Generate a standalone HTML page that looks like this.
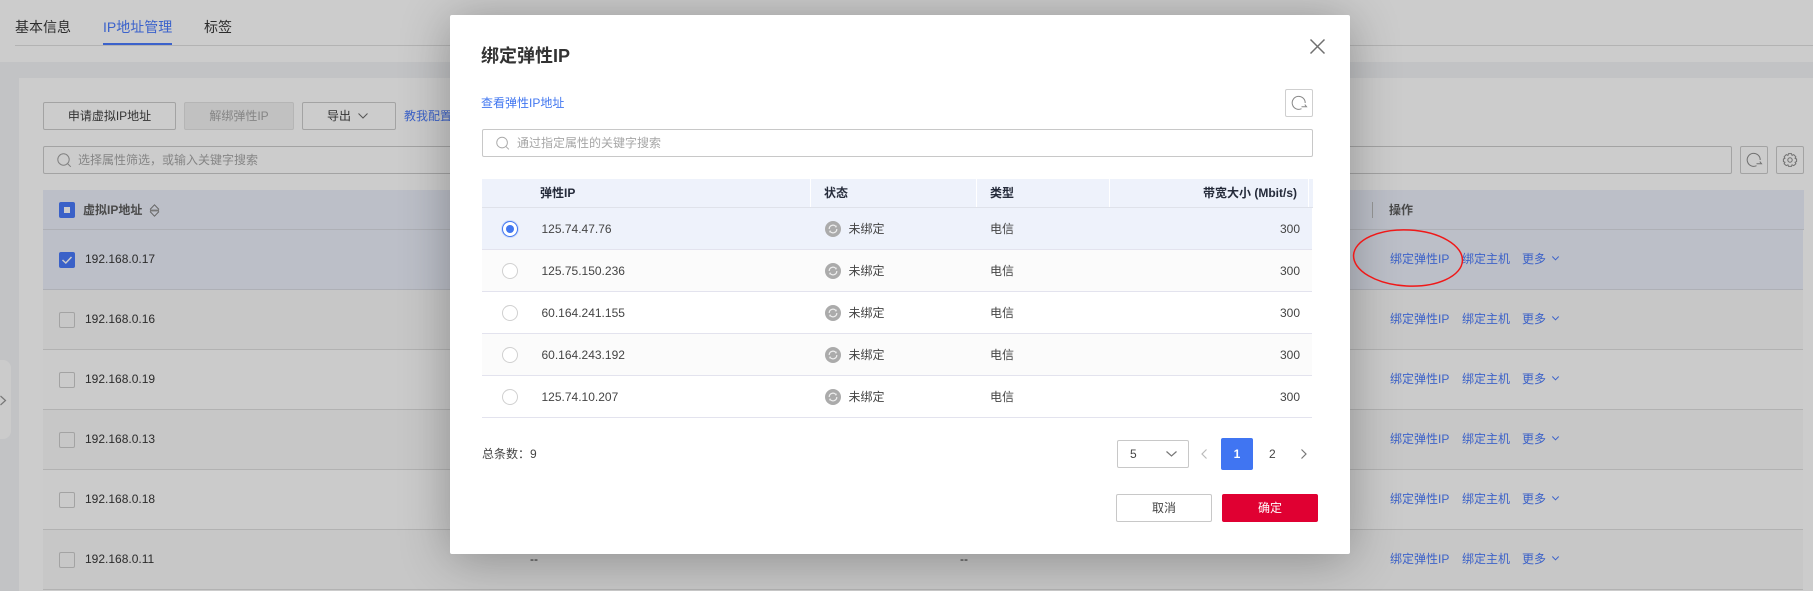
<!DOCTYPE html>
<html lang="zh"><head><meta charset="utf-8"><title>绑定弹性IP</title>
<style>
html,body{margin:0;padding:0;width:1813px;height:591px;overflow:hidden;background:#ccc}
body{position:relative;font-family:"Liberation Sans","Noto Sans CJK SC",sans-serif;font-size:12px;color:#333}
.a{position:absolute;box-sizing:border-box}
.t{position:absolute;white-space:nowrap;line-height:16px;height:16px}
.b{position:absolute;box-sizing:border-box;border:1px solid #a3a3a3;border-radius:2px;height:28px;line-height:26px;text-align:center;color:#333;white-space:nowrap}
.row{position:absolute;left:43px;width:1760px;height:60px;box-sizing:border-box;border-bottom:1px solid #b2b2b2;background:#cbcbcb}
.row.d{background:#c7c7c7}
.cb{position:absolute;left:59px;width:16px;height:16px;box-sizing:border-box;border:1px solid #a3a3a3;border-radius:2px}
.ip{left:85px;color:#2b2b2b}
.lk{color:#3c62c8}
.mr{position:absolute;left:482px;width:830px;height:42px;box-sizing:border-box;border-bottom:1px solid #e3e3ee;background:#fff}
.mr.g{background:#fbfbfb}
.r{position:absolute;left:502px;width:16px;height:16px;box-sizing:border-box;border:1px solid #d0d0d0;border-radius:50%;background:#fff}
.c{color:#444}
svg{position:absolute;overflow:visible}
</style></head><body>

<!-- background page -->
<div class="a" style="left:0;top:62px;width:1813px;height:529px;background:#c2c3c5"></div>
<div class="a" style="left:19px;top:78px;width:1794px;height:513px;background:#ccc"></div>
<div class="a" style="left:15px;top:45px;width:1798px;height:1px;background:#b3b3b3"></div>
<div class="a" style="left:103px;top:43px;width:69px;height:2px;background:#3b62cb"></div>
<div class="t" style="left:15px;top:19px;font-size:14px;color:#2c2c2c">基本信息</div>
<div class="t" style="left:103px;top:19px;font-size:14px;color:#3b62cb">IP地址管理</div>
<div class="t" style="left:204px;top:19px;font-size:14px;color:#2c2c2c">标签</div>

<div class="a" style="left:0;top:360px;width:11px;height:79px;background:#cbcbcb;border-radius:0 8px 8px 0"></div>
<svg style="left:0;top:395px" width="8" height="12" viewBox="0 0 8 12"><path d="M0.5 1L5.5 5.5L0.5 10" fill="none" stroke="#777" stroke-width="1.2"/></svg>

<div class="b" style="left:43px;top:102px;width:133px">申请虚拟IP地址</div>
<div class="b" style="left:184px;top:102px;width:110px;background:#c1c1c1;border-color:#b5b5b5;color:#858585">解绑弹性IP</div>
<div class="b" style="left:302px;top:102px;width:94px"><span style="position:absolute;left:24px;top:0">导出</span></div>
<svg style="left:358px;top:113px" width="10" height="6" viewBox="0 0 10 6"><path d="M0.5 0.5L5 5L9.5 0.5" fill="none" stroke="#555" stroke-width="1"/></svg>
<div class="t lk" style="left:404px;top:108px">教我配置</div>

<div class="a" style="left:43px;top:146px;width:1689px;height:28px;border:1px solid #a3a3a3;border-radius:2px"></div>
<svg style="left:57px;top:153px" width="15" height="15" viewBox="0 0 15 15"><circle cx="6.5" cy="6.5" r="5.7" fill="none" stroke="#808080" stroke-width="1"/><path d="M10.6 10.6L13.8 13.8" stroke="#808080" stroke-width="1"/></svg>
<div class="t" style="left:78px;top:152px;color:#858585">选择属性筛选，或输入关键字搜索</div>

<div class="a" style="left:1740px;top:146px;width:28px;height:28px;border:1px solid #a3a3a3;border-radius:2px"></div>
<svg style="left:1747px;top:153px" width="15" height="14" viewBox="0 0 15 14"><path d="M13.2 7A6.5 6.5 0 1 0 9.5 12.7" fill="none" stroke="#707070" stroke-width="1"/><path d="M9.5 10.7H14.5L12.8 8.6" fill="none" stroke="#707070" stroke-width="1"/></svg>
<div class="a" style="left:1776px;top:146px;width:28px;height:28px;border:1px solid #a3a3a3;border-radius:2px"></div>
<svg style="left:1783px;top:153px" width="14" height="14" viewBox="0 0 14 14"><path d="M5.5 0.6H8.5L9 2.4L10.7 1.6L12.9 3.8L12 5.4L13.6 6V8.6L12 9.2L12.9 10.8L10.7 12.6L9 11.8L8.5 13.4H5.5L5 11.8L3.3 12.6L1.1 10.8L2 9.2L0.4 8.6V6L2 5.4L1.1 3.8L3.3 1.6L5 2.4Z" fill="none" stroke="#707070" stroke-width="1" stroke-linejoin="round"/><circle cx="7" cy="7" r="2.2" fill="none" stroke="#707070" stroke-width="1"/></svg>

<!-- table -->
<div class="a" style="left:43px;top:190px;width:1761px;height:40px;background:#bcbfc8;border-bottom:1px solid #aeb0b6"></div>
<div class="a" style="left:59px;top:202px;width:16px;height:16px;background:#3a61c8;border-radius:2px"></div>
<div class="a" style="left:64px;top:207px;width:6px;height:6px;background:#ccc"></div>
<div class="t" style="left:83px;top:202px;color:#4a4a4a;font-weight:bold">虚拟IP地址</div>
<svg style="left:149px;top:204px" width="11" height="13" viewBox="0 0 11 13"><path d="M1 5.5L5.5 0.8L10 5.5M1 7.5L5.5 12.2L10 7.5" fill="none" stroke="#666" stroke-width="1"/><rect x="1" y="5.6" width="9" height="1.8" fill="#777"/></svg>
<div class="a" style="left:1372px;top:202px;width:1px;height:16px;background:#979797"></div>
<div class="t" style="left:1389px;top:202px;color:#4a4a4a;font-weight:bold">操作</div>

<div class="row" style="top:230px;background:#bcbfc8;border-bottom-color:#aeb0b6"></div>
<div class="row d" style="top:290px"></div>
<div class="row" style="top:350px"></div>
<div class="row d" style="top:410px"></div>
<div class="row" style="top:470px"></div>
<div class="row d" style="top:530px"></div>

<div class="a" style="left:59px;top:252px;width:16px;height:16px;background:#3a61c8;border-radius:2px"></div>
<svg style="left:59px;top:252px" width="16" height="16" viewBox="0 0 16 16"><path d="M3.5 8L6.8 11L12.5 5" fill="none" stroke="#ccc" stroke-width="1.5"/></svg>
<div class="cb" style="top:312px"></div>
<div class="cb" style="top:372px"></div>
<div class="cb" style="top:432px"></div>
<div class="cb" style="top:492px"></div>
<div class="cb" style="top:552px"></div>

<div class="t ip" style="top:251px">192.168.0.17</div>
<div class="t ip" style="top:311px">192.168.0.16</div>
<div class="t ip" style="top:371px">192.168.0.19</div>
<div class="t ip" style="top:431px">192.168.0.13</div>
<div class="t ip" style="top:491px">192.168.0.18</div>
<div class="t ip" style="top:551px">192.168.0.11</div>
<div class="t" style="left:530px;top:551px;color:#222">--</div>
<div class="t" style="left:960px;top:551px;color:#222">--</div>

<div class="t lk" style="left:1390px;top:251px">绑定弹性IP</div><div class="t lk" style="left:1462px;top:251px">绑定主机</div><div class="t lk" style="left:1522px;top:251px">更多</div>
<div class="t lk" style="left:1390px;top:311px">绑定弹性IP</div><div class="t lk" style="left:1462px;top:311px">绑定主机</div><div class="t lk" style="left:1522px;top:311px">更多</div>
<div class="t lk" style="left:1390px;top:371px">绑定弹性IP</div><div class="t lk" style="left:1462px;top:371px">绑定主机</div><div class="t lk" style="left:1522px;top:371px">更多</div>
<div class="t lk" style="left:1390px;top:431px">绑定弹性IP</div><div class="t lk" style="left:1462px;top:431px">绑定主机</div><div class="t lk" style="left:1522px;top:431px">更多</div>
<div class="t lk" style="left:1390px;top:491px">绑定弹性IP</div><div class="t lk" style="left:1462px;top:491px">绑定主机</div><div class="t lk" style="left:1522px;top:491px">更多</div>
<div class="t lk" style="left:1390px;top:551px">绑定弹性IP</div><div class="t lk" style="left:1462px;top:551px">绑定主机</div><div class="t lk" style="left:1522px;top:551px">更多</div>
<svg style="left:1552px;top:256px" width="7" height="5" viewBox="0 0 7 5"><path d="M0.3 0.5L3.5 3.8L6.7 0.5" fill="none" stroke="#3c62c8"/></svg>
<svg style="left:1552px;top:316px" width="7" height="5" viewBox="0 0 7 5"><path d="M0.3 0.5L3.5 3.8L6.7 0.5" fill="none" stroke="#3c62c8"/></svg>
<svg style="left:1552px;top:376px" width="7" height="5" viewBox="0 0 7 5"><path d="M0.3 0.5L3.5 3.8L6.7 0.5" fill="none" stroke="#3c62c8"/></svg>
<svg style="left:1552px;top:436px" width="7" height="5" viewBox="0 0 7 5"><path d="M0.3 0.5L3.5 3.8L6.7 0.5" fill="none" stroke="#3c62c8"/></svg>
<svg style="left:1552px;top:496px" width="7" height="5" viewBox="0 0 7 5"><path d="M0.3 0.5L3.5 3.8L6.7 0.5" fill="none" stroke="#3c62c8"/></svg>
<svg style="left:1552px;top:556px" width="7" height="5" viewBox="0 0 7 5"><path d="M0.3 0.5L3.5 3.8L6.7 0.5" fill="none" stroke="#3c62c8"/></svg>

<!-- modal -->
<div class="a" style="left:450px;top:15px;width:900px;height:539px;background:#fff;border-radius:2px;box-shadow:0 5px 50px rgba(0,0,0,.3)"></div>
<div class="t" style="left:481px;top:45px;font-size:18px;line-height:22px;height:22px;font-weight:bold;color:#333">绑定弹性IP</div>
<svg style="left:1310px;top:39px" width="15" height="15" viewBox="0 0 15 15"><path d="M0.5 0.5L14.5 14.5M14.5 0.5L0.5 14.5" stroke="#707070" stroke-width="1.5"/></svg>
<div class="t" style="left:481px;top:95px;color:#4277f0">查看弹性IP地址</div>
<div class="a" style="left:1285px;top:89px;width:28px;height:28px;border:1px solid #cfcfcf;border-radius:2px"></div>
<svg style="left:1292px;top:96px" width="15" height="14" viewBox="0 0 15 14"><path d="M13.2 7A6.5 6.5 0 1 0 9.5 12.7" fill="none" stroke="#888" stroke-width="1"/><path d="M9.5 10.7H14.5L12.8 8.6" fill="none" stroke="#888" stroke-width="1"/></svg>
<div class="a" style="left:482px;top:129px;width:831px;height:28px;border:1px solid #c8c8c8;border-radius:2px"></div>
<svg style="left:496px;top:136px" width="14" height="15" viewBox="0 0 15 15"><circle cx="6.5" cy="6.5" r="5.7" fill="none" stroke="#aaa" stroke-width="1"/><path d="M10.6 10.6L13.8 13.8" stroke="#aaa" stroke-width="1"/></svg>
<div class="t" style="left:517px;top:135px;color:#a6a6a6">通过指定属性的关键字搜索</div>

<div class="a" style="left:482px;top:179px;width:831px;height:29px;background:#eef2fb;border-bottom:1px solid #dfe2ea"></div>
<div class="a" style="left:810px;top:179px;width:1px;height:28px;background:#fff"></div>
<div class="a" style="left:976px;top:179px;width:1px;height:28px;background:#fff"></div>
<div class="a" style="left:1109px;top:179px;width:1px;height:28px;background:#fff"></div>
<div class="a" style="left:1308px;top:179px;width:1px;height:28px;background:#fff"></div>
<div class="t" style="left:540px;top:185px;font-weight:bold;color:#252b3a">弹性IP</div>
<div class="t" style="left:824px;top:185px;font-weight:bold;color:#252b3a">状态</div>
<div class="t" style="left:990px;top:185px;font-weight:bold;color:#252b3a">类型</div>
<div class="t" style="right:516px;top:185px;font-weight:bold;color:#252b3a">带宽大小 (Mbit/s)</div>

<div class="mr" style="top:208px;background:#eef2fb"></div>
<div class="mr g" style="top:250px"></div>
<div class="mr" style="top:292px"></div>
<div class="mr g" style="top:334px"></div>
<div class="mr" style="top:376px"></div>

<div class="r" style="top:221px;border:1.5px solid #4277f0;box-shadow:0 0 0 1px #cfdcfb"></div>
<div class="a" style="left:506px;top:225px;width:8px;height:8px;border-radius:50%;background:#4277f0"></div>
<div class="r" style="top:263px"></div>
<div class="r" style="top:305px"></div>
<div class="r" style="top:347px"></div>
<div class="r" style="top:389px"></div>

<div class="t c" style="left:541.5px;top:221px">125.74.47.76</div>
<div class="t c" style="left:541.5px;top:263px">125.75.150.236</div>
<div class="t c" style="left:541.5px;top:305px">60.164.241.155</div>
<div class="t c" style="left:541.5px;top:347px">60.164.243.192</div>
<div class="t c" style="left:541.5px;top:389px">125.74.10.207</div>

<svg style="left:825px;top:221px" width="16" height="16" viewBox="0 0 16 16"><circle cx="8" cy="8" r="8" fill="#ababab"/><path d="M4.2 8A3.8 3.8 0 0 1 10.8 5.4M11.8 8A3.8 3.8 0 0 1 5.2 10.6" fill="none" stroke="#eee" stroke-width="1.2"/><path d="M9.8 6.4L11.8 6.2L11.4 4.2ZM6.2 9.6L4.2 9.8L4.6 11.8Z" fill="#eee"/></svg>
<svg style="left:825px;top:263px" width="16" height="16" viewBox="0 0 16 16"><circle cx="8" cy="8" r="8" fill="#ababab"/><path d="M4.2 8A3.8 3.8 0 0 1 10.8 5.4M11.8 8A3.8 3.8 0 0 1 5.2 10.6" fill="none" stroke="#eee" stroke-width="1.2"/><path d="M9.8 6.4L11.8 6.2L11.4 4.2ZM6.2 9.6L4.2 9.8L4.6 11.8Z" fill="#eee"/></svg>
<svg style="left:825px;top:305px" width="16" height="16" viewBox="0 0 16 16"><circle cx="8" cy="8" r="8" fill="#ababab"/><path d="M4.2 8A3.8 3.8 0 0 1 10.8 5.4M11.8 8A3.8 3.8 0 0 1 5.2 10.6" fill="none" stroke="#eee" stroke-width="1.2"/><path d="M9.8 6.4L11.8 6.2L11.4 4.2ZM6.2 9.6L4.2 9.8L4.6 11.8Z" fill="#eee"/></svg>
<svg style="left:825px;top:347px" width="16" height="16" viewBox="0 0 16 16"><circle cx="8" cy="8" r="8" fill="#ababab"/><path d="M4.2 8A3.8 3.8 0 0 1 10.8 5.4M11.8 8A3.8 3.8 0 0 1 5.2 10.6" fill="none" stroke="#eee" stroke-width="1.2"/><path d="M9.8 6.4L11.8 6.2L11.4 4.2ZM6.2 9.6L4.2 9.8L4.6 11.8Z" fill="#eee"/></svg>
<svg style="left:825px;top:389px" width="16" height="16" viewBox="0 0 16 16"><circle cx="8" cy="8" r="8" fill="#ababab"/><path d="M4.2 8A3.8 3.8 0 0 1 10.8 5.4M11.8 8A3.8 3.8 0 0 1 5.2 10.6" fill="none" stroke="#eee" stroke-width="1.2"/><path d="M9.8 6.4L11.8 6.2L11.4 4.2ZM6.2 9.6L4.2 9.8L4.6 11.8Z" fill="#eee"/></svg>

<div class="t c" style="left:848.5px;top:221px">未绑定</div>
<div class="t c" style="left:848.5px;top:263px">未绑定</div>
<div class="t c" style="left:848.5px;top:305px">未绑定</div>
<div class="t c" style="left:848.5px;top:347px">未绑定</div>
<div class="t c" style="left:848.5px;top:389px">未绑定</div>

<div class="t c" style="left:990px;top:221px">电信</div>
<div class="t c" style="left:990px;top:263px">电信</div>
<div class="t c" style="left:990px;top:305px">电信</div>
<div class="t c" style="left:990px;top:347px">电信</div>
<div class="t c" style="left:990px;top:389px">电信</div>

<div class="t c" style="right:513px;top:221px">300</div>
<div class="t c" style="right:513px;top:263px">300</div>
<div class="t c" style="right:513px;top:305px">300</div>
<div class="t c" style="right:513px;top:347px">300</div>
<div class="t c" style="right:513px;top:389px">300</div>

<div class="t c" style="left:482px;top:446px">总条数：9</div>
<div class="a" style="left:1117px;top:440px;width:72px;height:28px;border:1px solid #c8c8c8;border-radius:2px"></div>
<div class="t c" style="left:1130px;top:446px">5</div>
<svg style="left:1166px;top:451px" width="11" height="6" viewBox="0 0 11 6"><path d="M0.5 0.5L5.5 5L10.5 0.5" fill="none" stroke="#777" stroke-width="1.2"/></svg>
<svg style="left:1201px;top:449px" width="6" height="10" viewBox="0 0 6 10"><path d="M5.5 0.5L1 5L5.5 9.5" fill="none" stroke="#bbb" stroke-width="1.2"/></svg>
<div class="a" style="left:1221px;top:438px;width:32px;height:32px;background:#4075f2;border-radius:2px;color:#fff;font-weight:bold;text-align:center;line-height:32px">1</div>
<div class="t c" style="left:1269px;top:446px">2</div>
<svg style="left:1301px;top:449px" width="6" height="10" viewBox="0 0 6 10"><path d="M0.5 0.5L5 5L0.5 9.5" fill="none" stroke="#777" stroke-width="1.2"/></svg>
<div class="b" style="left:1116px;top:494px;width:96px;border-color:#c8c8c8;color:#444">取消</div>
<div class="b" style="left:1222px;top:494px;width:96px;background:#e00032;border-color:#e00032;color:#fff">确定</div>

<!-- annotation -->
<svg style="left:0;top:0" width="1813" height="591" viewBox="0 0 1813 591"><ellipse cx="1408" cy="258" rx="54.5" ry="28" transform="rotate(3 1408 258)" fill="none" stroke="#f01818" stroke-width="1.5"/></svg>
</body></html>
